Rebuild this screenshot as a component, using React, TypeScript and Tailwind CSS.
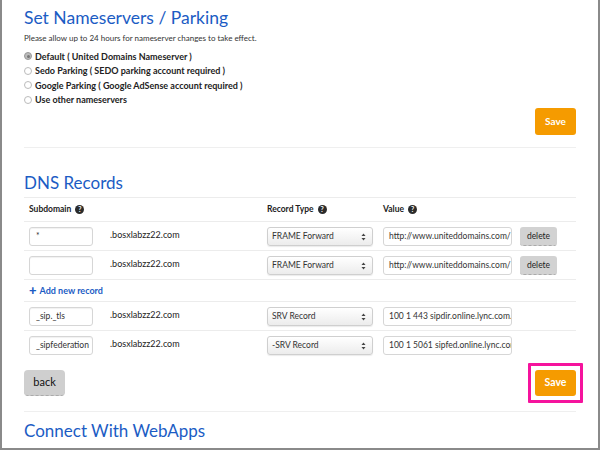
import * as React from "react";

const BLUE = "text-[#1b5cc4]";

function Help() {
  return (
    <span className="ml-[4px] inline-flex h-[9px] w-[9px] items-center justify-center rounded-full bg-[#2b2b2b] text-[7px] font-bold leading-none text-white">
      ?
    </span>
  );
}

function Radio({ checked, label }: { checked?: boolean; label: string }) {
  return (
    <label className="flex h-[14.5px] items-center gap-[3px] text-[9px] font-bold text-[#222]">
      <span
        className={
          checked
            ? "flex h-[8px] w-[8px] items-center justify-center rounded-full border border-[#999] bg-[#bbb]"
            : "h-[8px] w-[8px] rounded-full border border-[#bbb] bg-white"
        }
      >
        {checked && <span className="h-[3px] w-[3px] rounded-full bg-[#777]" />}
      </span>
      {label}
    </label>
  );
}

function TextBox({ value }: { value: string }) {
  return (
    <div className="flex h-[19px] w-[64px] items-center overflow-hidden whitespace-nowrap rounded-[3px] border border-[#d6d6d6] bg-white px-[6px] text-[8.5px] text-[#333] shadow-[inset_0_1px_1px_rgba(0,0,0,0.06)]">
      {value}
    </div>
  );
}

function Select({ value }: { value: string }) {
  return (
    <div className="flex h-[19px] w-[106px] items-center justify-between rounded-[3px] border border-[#cfcfcf] bg-gradient-to-b from-white to-[#ececec] px-[4px] text-[8.5px] text-[#333] shadow-[0_1px_1px_rgba(0,0,0,0.08)]">
      <span>{value}</span>
      <svg width="5" height="8" viewBox="0 0 5 8" className="mr-[2px]">
        <path d="M0.5 3 L2.5 0.5 L4.5 3 Z" fill="#444" />
        <path d="M0.5 5 L2.5 7.5 L4.5 5 Z" fill="#444" />
      </svg>
    </div>
  );
}

function ValueBox({ value }: { value: string }) {
  return (
    <div className="flex h-[19px] w-[129px] items-center overflow-hidden whitespace-nowrap rounded-[3px] border border-[#d6d6d6] bg-white px-[5px] text-[8.5px] text-[#333]">
      {value}
    </div>
  );
}

function DeleteBtn() {
  return (
    <button className="block h-[19px] w-[37px] rounded-[3px] border-b border-dashed border-[#aaa] bg-[#d2d2d2] text-[8.5px] text-[#222]">
      delete
    </button>
  );
}

const records = [
  { sub: "*", type: "FRAME Forward", value: "http://www.uniteddomains.com/", del: true },
  { sub: "", type: "FRAME Forward", value: "http://www.uniteddomains.com/", del: true },
];

const srv = [
  { sub: "_sip._tls", type: "SRV Record", value: "100 1 443 sipdir.online.lync.com." },
  { sub: "_sipfederation", type: "-SRV Record", value: "100 1 5061 sipfed.online.lync.com" },
];

function Row({ sub, type, value, del }: { sub: string; type: string; value: string; del?: boolean }) {
  return (
    <div className="grid h-[29px] grid-cols-[86px_157px_116px_137px_1fr] items-start border-t border-[#ececec] pt-[5px]">
      <div className="pl-[5px]">
        <TextBox value={sub} />
      </div>
      <div className="pt-[1px] text-[9px] text-[#222]">.bosxlabzz22.com</div>
      <Select value={type} />
      <ValueBox value={value} />
      <div>{del && <DeleteBtn />}</div>
    </div>
  );
}

export default function App() {
  return (
    <div
      className="h-[450px] w-[600px] overflow-hidden border-x-2 border-b-2 border-[#8a8a8a] bg-white"
      style={{ fontFamily: "Lato, 'Open Sans', sans-serif" }}
    >
      <div className="pl-[22px] pr-[22px]">
        <h1 className={`pt-[7px] text-[17.5px] leading-[22px] ${BLUE}`}>Set Nameservers / Parking</h1>
        <p className="mt-[4px] text-[8px] leading-[10px] text-[#333]">
          Please allow up to 24 hours for nameserver changes to take effect.
        </p>
        <div className="mt-[6px] flex flex-col">
          <Radio checked label="Default ( United Domains Nameserver )" />
          <Radio label="Sedo Parking ( SEDO parking account required )" />
          <Radio label="Google Parking ( Google AdSense account required )" />
          <Radio label="Use other nameservers" />
        </div>
        <div className="mt-[1px] flex justify-end">
          <button className="h-[27px] w-[41px] rounded-[3px] bg-[#f59b00] text-[10px] font-bold text-white">
            Save
          </button>
        </div>
        <div className="mt-[12px] border-t border-[#efefef]" />

        <h2 className={`pt-[24px] text-[17px] leading-[22px] ${BLUE}`}>DNS Records</h2>
        <div className="mt-[3px] border-t border-[#ececec]">
          <div className="grid h-[23px] grid-cols-[86px_157px_116px_137px_1fr] items-center text-[8.5px] font-bold text-[#222]">
            <div className="flex items-center pl-[5px]">
              Subdomain
              <Help />
            </div>
            <div />
            <div className="flex items-center">
              Record Type
              <Help />
            </div>
            <div className="flex items-center">
              Value
              <Help />
            </div>
            <div />
          </div>
          {records.map((r, i) => (
            <Row key={i} {...r} />
          ))}
          <div className="flex h-[22px] items-center border-t border-[#ececec] pl-[5px] text-[9px] font-bold text-[#1b5cc4]">
            <span className="mr-[3px] text-[13px] font-black leading-none">+</span>
            Add new record
          </div>
          {srv.map((r, i) => (
            <Row key={i} {...r} />
          ))}
        </div>

        <div className="mt-[11px] flex items-start justify-between">
          <button className="h-[26px] w-[41px] rounded-[4px] border-b border-dashed border-[#aaa] bg-[#cfcfcf] text-[11px] text-[#111]">
            back
          </button>
          <div className="relative">
            <button className="block h-[26px] w-[41px] rounded-[3px] bg-[#f59b00] text-[10.5px] font-bold text-white">
              Save
            </button>
            <span className="absolute -inset-x-[7px] -inset-y-[7px] rounded-[1px] border-[3px] border-[#f5139d]" />
          </div>
        </div>
        <div className="mt-[15px] border-t border-[#efefef]" />
        <h2 className={`pt-[8px] text-[17px] leading-[22px] ${BLUE}`}>Connect With WebApps</h2>
      </div>
    </div>
  );
}
